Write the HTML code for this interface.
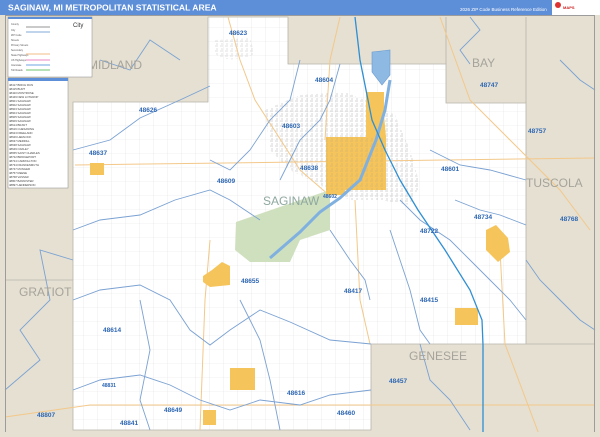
<!DOCTYPE html>
<html><head><meta charset="utf-8"><style>
html,body{margin:0;padding:0;width:600px;height:437px;overflow:hidden;background:#fff;font-family:"Liberation Sans",sans-serif}
</style></head><body>
<svg width="600" height="437" viewBox="0 0 600 437" xmlns="http://www.w3.org/2000/svg" font-family="Liberation Sans, sans-serif">
<defs>
<pattern id="g" width="14" height="14" patternUnits="userSpaceOnUse"><path d="M14 0V14M0 14H14" stroke="#e2e2e2" stroke-width="0.6" fill="none"/></pattern>
<pattern id="u" width="5" height="5" patternUnits="userSpaceOnUse"><path d="M0 1H3M2 3V5" stroke="#9a9a9a" stroke-width="0.5" fill="none"/></pattern>
</defs>
<rect x="0" y="0" width="600" height="437" fill="#e5e0d2"/>
<path d="M73 102 H208 V17 H288 V64 H446 V103 H526 V344 H371 V430 H73 Z" fill="#fff"/>
<path d="M73 102 H208 V17 H288 V64 H446 V103 H526 V344 H371 V430 H73 Z" fill="url(#g)"/>
<!-- urban street texture -->
<path d="M265 110 L300 95 L345 92 L365 100 L395 115 L410 150 L420 185 L410 205 L380 200 L350 200 L320 185 L290 170 L270 150 Z" fill="url(#u)" opacity="0.8"/>
<path d="M215 40 L250 38 L255 55 L230 60 L215 55 Z" fill="url(#u)" opacity="0.6"/>
<g stroke="#b9b4aa" stroke-width="0.8" fill="none">
<path d="M73 102 H208 V17 H288 V64 H446 V103 H526 V344 H371 V430 H73 Z"/>
<path d="M526 344 H595 M446 64 V17 M526 103 V17 M73 280 H5"/>
</g>
<g stroke="#f3c88a" stroke-width="1" fill="none">
<path d="M5 417 L90 405 L240 405 L595 405"/>
<path d="M75 165 L595 158"/>
<path d="M228 17 L240 60 L255 100 L300 170 L330 196"/>
<path d="M440 17 L470 100 L500 130 L560 190 L590 230"/>
<path d="M340 17 L330 60 L325 140"/>
<path d="M210 240 L205 300 L200 430"/>
<path d="M355 200 L360 300 L370 344"/>
<path d="M500 250 L505 344 L540 437"/>
</g>
<path d="M236 222 L300 200 L330 190 L330 230 L300 240 L290 262 L250 262 L235 250 Z" fill="#cfe0bf"/>
<path d="M372 52 L390 50 L390 75 L382 85 L372 72 Z" fill="#8db9e2" stroke="#6a9bd0" stroke-width="0.6"/>
<g fill="#f5c45a">
<path d="M366 92 H384 V115 L386 137 V190 H345 V195 H326 V137 H366 Z"/>
<rect x="90" y="163" width="14" height="12"/>
<path d="M203 276 L212 270 L222 262 L230 266 L230 285 L210 287 L203 282 Z"/>
<path d="M486 230 L496 225 L508 238 L510 252 L498 262 L486 250 Z"/>
<rect x="455" y="308" width="23" height="17"/>
<rect x="230" y="368" width="25" height="22"/>
<rect x="203" y="410" width="13" height="15"/>
</g>
<path d="M326 137 H384 V190 H326 Z" fill="url(#u)" opacity="0.5"/>
<path d="M270 258 L300 232 L320 212 L340 198 L360 180 L376 140 L385 110 L390 80" stroke="#7fb0df" stroke-width="3" fill="none"/>
<g stroke="#7aa1d2" stroke-width="0.9" fill="none">
<path d="M73 150 L110 140 L140 118 L180 100 L210 86"/>
<path d="M73 230 L100 220 L140 215 L175 200 L210 190 L230 200 L260 220"/>
<path d="M73 300 L100 290 L140 285 L170 300 L190 330 L210 345 L230 330 L260 310 L290 322 L330 340 L371 344"/>
<path d="M73 390 L100 380 L140 375 L170 385 L200 400 L230 410 L260 400 L300 405 L330 395 L371 390"/>
<path d="M140 300 L150 350 L140 400 L150 430"/>
<path d="M240 300 L260 340 L270 380 L280 430"/>
<path d="M300 60 L290 100 L270 120 L250 150 L230 170 L210 160"/>
<path d="M340 64 L330 100 L320 120 L300 140 L290 160 L280 180"/>
<path d="M400 200 L420 220 L450 240 L470 260 L490 280 L510 300 L526 320"/>
<path d="M390 230 L400 260 L410 290 L420 330 L430 344"/>
<path d="M330 230 L350 260 L365 280 L370 300"/>
<path d="M430 150 L460 165 L490 170 L526 180"/>
<path d="M455 200 L480 210 L500 215 L526 225"/>
<path d="M73 260 L40 250 L50 300 L20 330 L40 360 L5 390"/>
<path d="M526 260 L540 280 L560 300 L580 320 L595 330"/>
<path d="M420 344 L430 380 L450 400 L470 430"/>
<path d="M100 60 L130 70 L150 40 L180 60"/>
<path d="M560 60 L580 80 L595 90"/>
<path d="M470 17 L480 30 L460 50 L470 64"/>
</g>
<path d="M355 17 L360 60 L372 120 L385 150 L400 180 L418 210 L445 250 L470 290 L482 320 L483 345 L483 437" stroke="#2f8fd4" stroke-width="1.3" fill="none"/>
<g fill="#a6a39b" font-size="12">
<text x="88" y="69">MIDLAND</text>
<text x="472" y="67">BAY</text>
<text x="526" y="187">TUSCOLA</text>
<text x="19" y="296">GRATIOT</text>
<text x="409" y="360">GENESEE</text>
<text x="263" y="205" fill="#8fa8a0">SAGINAW</text>
</g>
<g fill="#2e67b4" font-size="6.5" font-weight="bold">
<text x="229" y="35">48623</text><text x="480" y="87">48747</text><text x="315" y="82">48604</text>
<text x="139" y="112">48626</text><text x="282" y="128">48603</text><text x="528" y="133">48757</text>
<text x="89" y="155">48637</text><text x="300" y="170">48638</text><text x="441" y="171">48601</text>
<text x="217" y="183">48609</text><text x="323" y="198" font-size="5">48602</text><text x="474" y="219">48734</text>
<text x="420" y="233">48722</text><text x="560" y="221">48768</text><text x="241" y="283">48655</text>
<text x="344" y="293">48417</text><text x="420" y="302">48415</text><text x="103" y="332">48614</text>
<text x="389" y="383">48457</text><text x="102" y="387" font-size="5">48831</text><text x="287" y="395">48616</text>
<text x="164" y="412">48649</text><text x="37" y="417">48807</text><text x="120" y="425">48841</text><text x="337" y="415">48460</text>
</g>
<rect x="5.5" y="15.5" width="589" height="417" fill="none" stroke="#9c9c9c" stroke-width="1"/>
<rect x="0" y="432" width="600" height="5" fill="#e5e0d2"/>
<rect x="0" y="0" width="600" height="15" fill="#5d8ed8"/>
<text x="8" y="10.5" fill="#fff" font-size="8.6" font-weight="bold">SAGINAW, MI METROPOLITAN STATISTICAL AREA</text>
<text x="460" y="11" fill="#fff" font-size="4.5">2026 ZIP Code Business Reference Edition</text>
<rect x="552" y="0" width="48" height="15" fill="#fff"/>
<circle cx="558" cy="5" r="3" fill="#d33"/>
<text x="563" y="9" fill="#c22" font-size="4" font-weight="bold">MAPS</text>
<rect x="8" y="17" width="84" height="60" fill="#fff" stroke="#888" stroke-width="0.5"/>
<rect x="8" y="17" width="84" height="2" fill="#5d8ed8"/>
<g stroke-width="1.2">
<line x1="26" y1="27" x2="50" y2="27" stroke="#aaa"/>
<line x1="26" y1="32" x2="50" y2="32" stroke="#9bbbe0"/>
<line x1="26" y1="54" x2="50" y2="54" stroke="#f7c9a0"/>
<line x1="26" y1="60" x2="50" y2="60" stroke="#f0a0d0"/>
<line x1="26" y1="65" x2="50" y2="65" stroke="#8ab8e8"/>
<line x1="26" y1="70" x2="50" y2="70" stroke="#8cd08c"/>
</g>
<text x="73" y="27" font-size="6" fill="#333">City</text>
<g fill="#555" font-size="2.5"><text x="11" y="25">County</text><text x="11" y="31">City</text><text x="11" y="36">ZIP Code</text><text x="11" y="41">Streets</text><text x="11" y="46">Primary Streets</text><text x="11" y="51">Secondary</text><text x="11" y="56">State Highways</text><text x="11" y="61">US Highways</text><text x="11" y="66">Interstate</text><text x="11" y="71">Toll Roads</text></g>
<rect x="8" y="78" width="60" height="110" fill="#fff" stroke="#888" stroke-width="0.5"/>
<rect x="8" y="78" width="60" height="3" fill="#5d8ed8"/>
<g fill="#444" font-size="2.8">
<text x="9" y="86">48417 BIRCH RUN</text><text x="9" y="90">48415 BURT</text><text x="9" y="94">48420 MONTROSE</text><text x="9" y="98">48449 NEW LOTHROP</text><text x="9" y="102">48601 SAGINAW</text><text x="9" y="106">48602 SAGINAW</text><text x="9" y="110">48603 SAGINAW</text><text x="9" y="114">48604 SAGINAW</text><text x="9" y="118">48605 SAGINAW</text><text x="9" y="122">48609 SAGINAW</text><text x="9" y="126">48614 BRANT</text><text x="9" y="130">48616 CHESANING</text><text x="9" y="134">48623 FREELAND</text><text x="9" y="138">48626 HEMLOCK</text><text x="9" y="142">48637 MERRILL</text><text x="9" y="146">48638 SAGINAW</text><text x="9" y="150">48649 OAKLEY</text><text x="9" y="154">48655 SAINT CHARLES</text><text x="9" y="158">48722 BRIDGEPORT</text><text x="9" y="162">48724 CARROLLTON</text><text x="9" y="166">48734 FRANKENMUTH</text><text x="9" y="170">48747 MUNGER</text><text x="9" y="174">48757 REESE</text><text x="9" y="178">48768 VASSAR</text><text x="9" y="182">48807 BANNISTER</text><text x="9" y="186">48897 HENDERSON</text>
</g>
</svg>
</body></html>
